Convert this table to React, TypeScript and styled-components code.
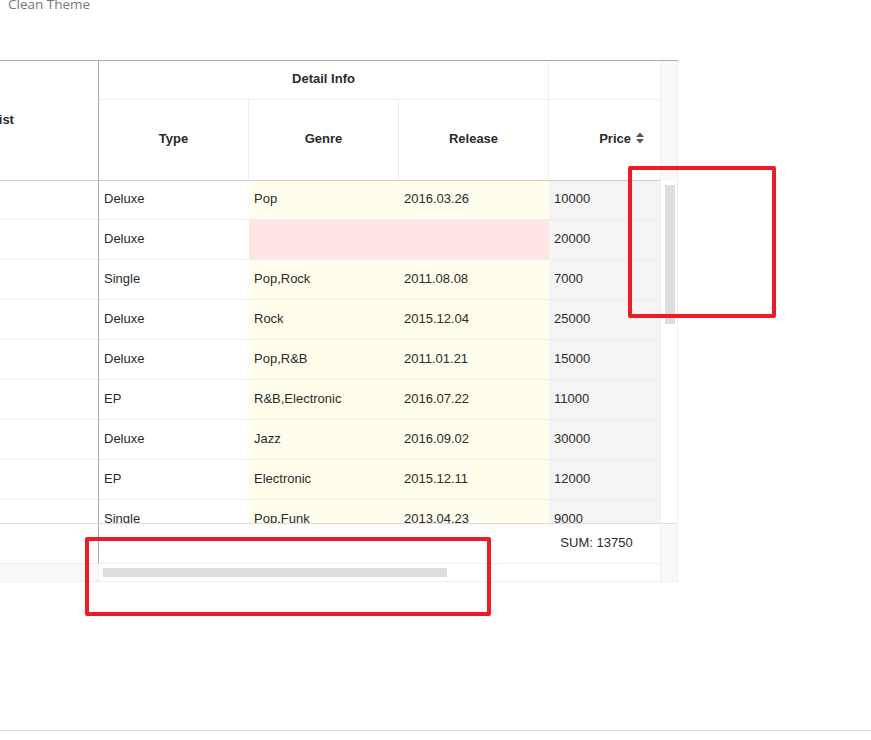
import React from 'react';
import styled, { createGlobalStyle } from 'styled-components';

const GlobalStyle = createGlobalStyle`
  html, body { margin: 0; padding: 0; background: #fff; }
  body { font-family: "Liberation Sans", Arial, sans-serif; }
  *, *::before, *::after { box-sizing: border-box; }
`;

const Page = styled.div`
  position: relative;
  width: 871px;
  height: 740px;
  overflow: hidden;
`;

const Title = styled.div`
  margin: -5px 0 0 8px;
  height: 18px;
  font: 13.5px/18px "Open Sans", sans-serif;
  color: #777;
`;

const Grid = styled.div`
  margin-top: 47px;
  width: 678px;
  display: flex;
  border-top: 1px solid #aaa;
  font-size: 13px;
  color: #2b2b2b;
`;

const Sheet = styled.div`
  width: 660px;
  flex: none;
  display: flex;
  flex-direction: column;
`;

const HeaderBand = styled.div`
  display: flex;
  height: 120px;
`;

const FrozenHead = styled.div`
  width: 99px;
  flex: none;
  border-right: 1px solid #aaa;
  border-bottom: 1px solid #ccc;
  display: flex;
  align-items: center;
  padding-bottom: 3px;
  overflow: hidden;
  font-weight: bold;
`;

const FrozenLabel = styled.span`
  margin-left: -20px;
  white-space: nowrap;
`;

const HeadMain = styled.div`
  width: 561px;
  display: flex;
  flex-direction: column;
`;

const HeadRow = styled.div<{ $h: number; $last?: boolean }>`
  display: flex;
  flex: none;
  height: ${(p) => p.$h}px;
  border-bottom: 1px solid ${(p) => (p.$last ? '#ccc' : '#eee')};
`;

const HeadCell = styled.div<{ $w: number; $edge?: boolean; $end?: boolean }>`
  width: ${(p) => p.$w}px;
  flex: none;
  display: flex;
  align-items: center;
  justify-content: ${(p) => (p.$end ? 'flex-end' : 'center')};
  padding-right: ${(p) => (p.$end ? '16px' : '0')};
  padding-bottom: 4px;
  border-right: ${(p) => (p.$edge ? 'none' : '1px solid #eee')};
  font-weight: bold;
  white-space: nowrap;
`;

const SortIcon = styled.svg`
  width: 8px;
  height: 12px;
  margin-left: 5px;
  margin-top: -1px;
`;

const BodyBand = styled.div`
  display: flex;
  height: 342px;
  overflow: hidden;
`;

const FrozenBody = styled.div`
  width: 99px;
  flex: none;
  border-right: 1px solid #aaa;
  display: flex;
  flex-direction: column;
`;

const FrozenRow = styled.div`
  flex: none;
  height: 40px;
  border-bottom: 1px solid #eee;
  background: #fff;
  &:first-child {
    height: 39px;
  }
`;

const Rows = styled.div`
  width: 561px;
  display: flex;
  flex-direction: column;
`;

type Tone = 'plain' | 'editable' | 'invalid' | 'disabled';
const toneBg: Record<Tone, string> = {
  plain: '#fff',
  editable: '#fffdeb',
  invalid: '#ffe5e5',
  disabled: '#f4f4f4',
};

const Cell = styled.div<{ $w: number; $tone: Tone }>`
  width: ${(p) => p.$w}px;
  flex: none;
  display: flex;
  align-items: center;
  padding: 0 0 3px 5px;
  background: ${(p) => toneBg[p.$tone]};
  white-space: nowrap;
  overflow: hidden;
`;

const Row = styled.div`
  display: flex;
  flex: none;
  height: 40px;
  border-bottom: 1px solid #eee;
  &:first-child {
    height: 39px;
  }
  &:first-child > ${Cell} {
    padding-bottom: 4px;
  }
`;

const SummaryBand = styled.div`
  display: flex;
  height: 41px;
  border-top: 1px solid #ddd;
  border-bottom: 1px solid #eee;
`;

const FrozenSummary = styled.div`
  width: 99px;
  flex: none;
  border-right: 1px solid #aaa;
`;

const SummarySpacer = styled.div`
  width: 450px;
  flex: none;
`;

const SummaryCell = styled.div`
  width: 111px;
  flex: none;
  display: flex;
  align-items: center;
  justify-content: center;
  padding: 0 16px 3px 0;
  white-space: nowrap;
`;

const ScrollBand = styled.div`
  display: flex;
  height: 18px;
  border-bottom: 1px solid #eee;
`;

const ScrollFrozen = styled.div`
  width: 99px;
  flex: none;
  background: #f9f9f9;
  border-right: 1px solid #eee;
`;

const ScrollTrack = styled.div`
  flex: 1;
  padding: 4px 0 0 4px;
`;

const HThumb = styled.div`
  width: 344px;
  height: 9px;
  background: #ddd;
`;

const VBar = styled.div`
  width: 18px;
  flex: none;
  display: flex;
  flex-direction: column;
  border-left: 1px solid #eee;
  border-right: 1px solid #eee;
`;

const VBarCap = styled.div`
  height: 120px;
  background: #f9f9f9;
`;

const VBarTrack = styled.div`
  height: 342px;
  background: #fff;
  padding: 4px 0 0 4px;
`;

const VThumb = styled.div`
  width: 10px;
  height: 139px;
  background: #ddd;
`;

const VBarFoot = styled.div`
  height: 59px;
  background: #f9f9f9;
  border-top: 1px solid #ddd;
  border-bottom: 1px solid #eee;
`;

const Rule = styled.div`
  margin-top: 148px;
  width: 871px;
  border-top: 1px solid #ddd;
`;

const Callout = styled.div<{ $x: number; $y: number; $w: number; $h: number }>`
  position: absolute;
  left: ${(p) => p.$x}px;
  top: ${(p) => p.$y}px;
  width: ${(p) => p.$w}px;
  height: ${(p) => p.$h}px;
  border: 4px solid #ed1c24;
  border-radius: 2px;
  pointer-events: none;
`;

type Album = { type: string; genre: string; release: string; price: string; invalid?: boolean };

const albums: Album[] = [
  { type: 'Deluxe', genre: 'Pop', release: '2016.03.26', price: '10000' },
  { type: 'Deluxe', genre: '', release: '', price: '20000', invalid: true },
  { type: 'Single', genre: 'Pop,Rock', release: '2011.08.08', price: '7000' },
  { type: 'Deluxe', genre: 'Rock', release: '2015.12.04', price: '25000' },
  { type: 'Deluxe', genre: 'Pop,R&B', release: '2011.01.21', price: '15000' },
  { type: 'EP', genre: 'R&B,Electronic', release: '2016.07.22', price: '11000' },
  { type: 'Deluxe', genre: 'Jazz', release: '2016.09.02', price: '30000' },
  { type: 'EP', genre: 'Electronic', release: '2015.12.11', price: '12000' },
  { type: 'Single', genre: 'Pop,Funk', release: '2013.04.23', price: '9000' },
];

export default function App() {
  return (
    <>
      <GlobalStyle />
      <Page>
        <Title>Clean Theme</Title>
        <Grid>
          <Sheet>
            <HeaderBand>
              <FrozenHead>
                <FrozenLabel>Artist</FrozenLabel>
              </FrozenHead>
              <HeadMain>
                <HeadRow $h={39}>
                  <HeadCell $w={450}>Detail Info</HeadCell>
                  <HeadCell $w={111} $edge />
                </HeadRow>
                <HeadRow $h={81} $last>
                  <HeadCell $w={150}>Type</HeadCell>
                  <HeadCell $w={150}>Genre</HeadCell>
                  <HeadCell $w={150}>Release</HeadCell>
                  <HeadCell $w={111} $edge $end>
                    Price
                    <SortIcon viewBox="0 0 8 12">
                      <polygon points="0,5 4,0.5 8,5" fill="#555" />
                      <polygon points="0,7 8,7 4,11.5" fill="#555" />
                    </SortIcon>
                  </HeadCell>
                </HeadRow>
              </HeadMain>
            </HeaderBand>
            <BodyBand>
              <FrozenBody>
                {albums.map((_, i) => (
                  <FrozenRow key={i} />
                ))}
              </FrozenBody>
              <Rows>
                {albums.map((a, i) => {
                  const tone: Tone = a.invalid ? 'invalid' : 'editable';
                  return (
                    <Row key={i}>
                      <Cell $w={150} $tone="plain">{a.type}</Cell>
                      <Cell $w={150} $tone={tone}>{a.genre}</Cell>
                      <Cell $w={150} $tone={tone}>{a.release}</Cell>
                      <Cell $w={111} $tone="disabled">{a.price}</Cell>
                    </Row>
                  );
                })}
              </Rows>
            </BodyBand>
            <SummaryBand>
              <FrozenSummary />
              <SummarySpacer />
              <SummaryCell>SUM: 13750</SummaryCell>
            </SummaryBand>
            <ScrollBand>
              <ScrollFrozen />
              <ScrollTrack>
                <HThumb />
              </ScrollTrack>
            </ScrollBand>
          </Sheet>
          <VBar>
            <VBarCap />
            <VBarTrack>
              <VThumb />
            </VBarTrack>
            <VBarFoot />
          </VBar>
        </Grid>
        <Rule />
        <Callout $x={628} $y={166} $w={148} $h={152} />
        <Callout $x={85} $y={537} $w={406} $h={79} />
      </Page>
    </>
  );
}
